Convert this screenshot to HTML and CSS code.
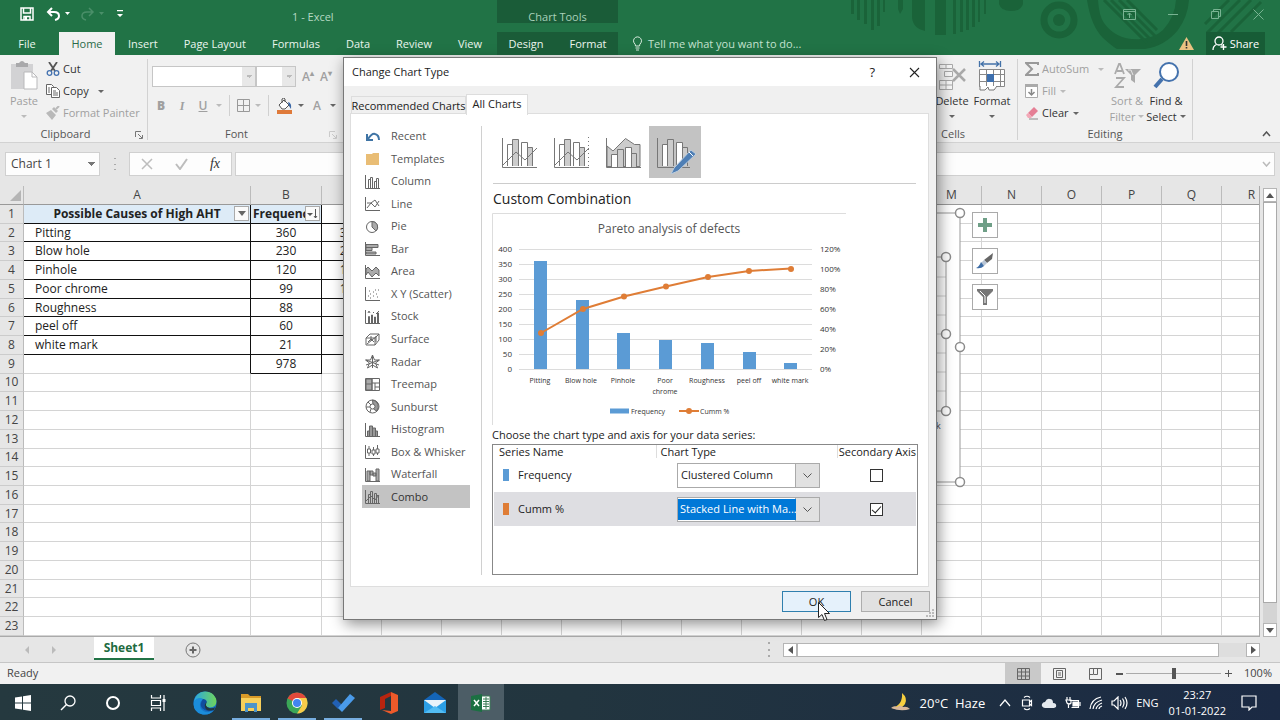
FILE: index.html
```html
<!DOCTYPE html>
<html lang="en">
<head>
<meta charset="utf-8">
<title>1 - Excel</title>
<link rel="stylesheet" href="styles.css">
</head>
<body>
<div class="desktop">
  <header class="titlebar">
    <svg class="backdrop" width="460" height="55" viewBox="820 0 460 55" aria-hidden="true">
      <g fill="#1a6339">
        <path d="M851 0h3v14h-3zM857 0h3v20h-3zM864 0h3v24h-3zM871 0h3v30h-3zM877 0h3v26h-3zM883 0h2v12h-2zM898 0h5v9l-3 5-2-5zM912 0h13v31q-13-3-13-15zM935 0h11v35h-11zM953 0h3v34h-3zM960 0h3v32h-3zM966 0h3v30h-3zM972 0h3v27h-3zM978 0h2v22h-2zM984 0h2v14h-2z"/>
        <path d="M999 0h24v4q-2 7-12 7t-12-7z"/>
        <circle cx="1059" cy="20" r="6"/>
        <path d="M1087 0q4 26 16 38 10 9 14 11h28q20-3 33-19 10-14 11-30h-13q-1 17-13 30-9 8-22 9-24 2-37-16-5-7-6-23z"/>
      </g>
      <g fill="none" stroke="#1a6339">
        <circle cx="1059" cy="20" r="15" stroke-width="7"/>
        <path stroke-width="3" d="M1104 0l43 43M1111 0l42 42M1119 0l38 38M1127 0l30 30M1207 33l33-33M1218 33l33-33M1231 32l30-30M1205 24l24-24"/>
      </g>
    </svg>
    <div class="quick">
      <button aria-label="Save"><svg width="14" height="14" viewBox="0 0 14 14"><path d="M1 1h12v12H1zM3.500 1v5h7V1M4 13V9.500h6V13" fill="none" stroke="#fff" stroke-width="1.500"/><path d="M5 10h2v3H5z" fill="#fff"/></svg></button>
      <button aria-label="Undo"><svg width="24" height="14" viewBox="0 0 24 14"><path d="M6 1L2 5l4 4M2 5h6q5 0 5 4 0 3-4 4" fill="none" stroke="#fff" stroke-width="2"/><path d="M19 5h5l-2.500 3z" fill="#fff"/></svg></button>
      <button aria-label="Redo"><svg width="24" height="14" viewBox="0 0 24 14"><path d="M9 1l4 4-4 4M13 5H7q-5 0-5 4 0 3 4 4" fill="none" stroke="#4a8f69" stroke-width="1.500"/><path d="M19 5h5l-2.500 3z" fill="#4a8f69"/></svg></button>
      <button aria-label="Customize"><svg width="8" height="8" viewBox="0 0 8 8"><path d="M1 0h6v1.200H1zM1 4h6L4 7z" fill="#fff"/></svg></button>
    </div>
    <h1 class="doc">1 - Excel</h1>
    <div class="window-buttons">
      <button aria-label="Ribbon options"><svg width="13" height="11" viewBox="0 0 13 11"><path d="M.5.5h12v10H.5zM.5 2.500h12M6.500 9V4M4.500 6l2-2 2 2"/></svg></button>
      <button aria-label="Minimize"><svg width="11" height="11" viewBox="0 0 11 11"><path d="M0 5.500h10"/></svg></button>
      <button aria-label="Restore"><svg width="10" height="10" viewBox="0 0 10 10"><path d="M.5 2.500h7v7h-7zM2.500 2.500v-2h7v7h-2"/></svg></button>
      <button aria-label="Close"><svg width="11" height="11" viewBox="0 0 11 11"><path d="M.5.5l10 10M10.500.5l-10 10"/></svg></button>
    </div>
  </header>
  <nav class="tabs">
    <button class="tab file">File</button>
    <button class="tab active">Home</button>
    <button class="tab">Insert</button>
    <button class="tab">Page Layout</button>
    <button class="tab">Formulas</button>
    <button class="tab">Data</button>
    <button class="tab">Review</button>
    <button class="tab">View</button>
    <div class="context">
      <span class="context-title">Chart Tools</span>
      <button class="tab">Design</button>
      <button class="tab">Format</button>
    </div>
    <button class="tell"><svg width="11" height="15" viewBox="0 0 11 15"><path d="M3.500 10q0-2-1.500-3.200A4 4 0 1 1 9 6.800Q7.500 8 7.500 10zM3.500 12h4M4 14h3" fill="none" stroke="#d9ecdf"/></svg>Tell me what you want to do...</button>
    <svg class="warn" width="15" height="13" viewBox="0 0 15 13"><path d="M7.500 0L15 13H0z" fill="#eac282"/><path d="M6.700 4h1.600v5H6.700zM6.700 10h1.600v1.500H6.700z" fill="#333"/></svg>
    <button class="share"><svg width="15" height="15" viewBox="0 0 15 15"><circle cx="7" cy="5" r="4"/><path d="M1 14q0-4 3.500-5.500M11.500 8v6M8.500 11h6M9 8.500l1.500 1"/></svg>Share</button>
  </nav>

  <section class="ribbon" aria-label="Ribbon">
    <div class="group clipboard">
      <div class="tools">
        <button class="big dim"><svg width="28" height="30" viewBox="0 0 28 30"><path d="M1 3h22v25H1z" fill="#d2d2d4"/><path d="M6 2h3q3-4 6 0h3v4H6z" fill="#a9a9ab"/><path d="M14 11h8l5 5v12H14z" fill="#fff" stroke="#b9b9bb"/><path d="M22 11v5h5" fill="none" stroke="#b9b9bb"/></svg>Paste<i class="caret"></i></button>
        <div class="stack">
          <button><svg width="14" height="14" viewBox="0 0 14 14"><path d="M3 0l6 9M11 0L5 9" stroke="#555" stroke-width="1.800"/><circle cx="3.500" cy="11" r="2.300" fill="none" stroke="#4472b0" stroke-width="1.300"/><circle cx="10.500" cy="11" r="2.300" fill="none" stroke="#4472b0" stroke-width="1.300"/></svg>Cut</button>
          <button><svg width="14" height="14" viewBox="0 0 14 14"><g fill="#fff" stroke="#666"><path d="M.5.500h5l2 2v8h-7z"/><path d="M5.500 3.500h5l3 3v7h-8z"/></g><path d="M2 4h2M2 6h2M2 8h2M7 7h3M7 9h5M7 11h5" stroke="#666"/></svg>Copy<i class="caret"></i></button>
          <button class="dim"><svg width="14" height="14" viewBox="0 0 14 14"><path d="M0 7l5-3 5 5-4 5zM6 3l2-2 4 4-2 2z" fill="#b9b9b9"/><path d="M10 3l3-3" stroke="#b9b9b9" stroke-width="2"/></svg>Format Painter</button>
        </div>
      </div>
      <footer>Clipboard<svg class="launcher" width="8" height="8" viewBox="0 0 8 8"><path d="M.5 6V.5H6M3 3l4 4M7.500 4v3.500H4" /></svg></footer>
    </div>
    <div class="group font">
      <div class="tools font-tools">
        <div class="line">
          <select class="combo face" aria-label="Font" disabled><option></option></select><select class="combo size" aria-label="Font size" disabled><option></option></select>
          <button class="letter dim" aria-label="Increase font size">A<sup>▴</sup></button>
          <button class="letter small dim" aria-label="Decrease font size">A<sup>▾</sup></button>
        </div>
        <div class="line second">
          <button class="letter dim"><b>B</b></button>
          <button class="letter dim"><i class="serif">I</i></button>
          <button class="letter dim"><u>U</u></button><i class="caret pale"></i>
          <span class="sep"></span>
          <button class="dim" aria-label="Borders"><svg width="13" height="13" viewBox="0 0 13 13"><path d="M.5.500h12v12H.5zM6.500 0v13M0 6.500h13" fill="none" stroke="#999"/></svg></button><i class="caret pale"></i>
          <span class="sep"></span>
          <button aria-label="Fill colour"><svg width="17" height="16" viewBox="0 0 17 16"><path d="M1 12h15v4H1z" fill="#df7a3a"/><path d="M3 7l5-5 5 5-4 4H6z" fill="#fff" stroke="#555"/><path d="M6 5V1q2-2 3 0v3" fill="none" stroke="#555"/><path d="M12 4q4 1 3 7l-2-3z" fill="#3a67a6"/></svg></button><i class="caret"></i>
          <button class="letter dim" aria-label="Font colour">A</button><i class="caret"></i>
        </div>
      </div>
      <footer>Font<svg class="launcher pale" width="8" height="8" viewBox="0 0 8 8"><path d="M.5 6V.5H6M3 3l4 4M7.500 4v3.500H4"/></svg></footer>
    </div>
    <div class="filler"></div>
    <div class="group cells">
      <div class="tools">
        <button class="big"><svg width="28" height="30" viewBox="0 0 28 30"><g fill="#f8f8f8" stroke="#aaa"><path d="M1.500 3.500h13v4h-13zM8 3.500v4M6.500 10.500h8v5h-8zM1.500 19.500h13v9h-13zM8 19.500v9M1.500 24h13"/></g><path d="M15 8l12 12M27 8L15 20" stroke="#a9a9a9" stroke-width="2.500"/></svg>Delete<i class="caret"></i></button>
        <button class="big"><svg width="28" height="30" viewBox="0 0 28 30"><path d="M1.500 0v6M22.500 0v6M3 3h18M6 .500L3 3l3 2.500M18 .500L21 3l-3 2.500" fill="none" stroke="#4472a8" stroke-width="1.300"/><path d="M1.500 8.500h25v17h-25zM1.500 13.500h25M1.500 20.500h25M8.500 8v18M15.500 8v18M22.500 8v18" fill="#fff" stroke="#888"/><path d="M9 13h7v8H9z" fill="#3d6fae"/><path d="M2 25v4h5l3-3 1 3h5l3-4" fill="#fff" stroke="#777"/></svg>Format<i class="caret"></i></button>
      </div>
      <footer>Cells</footer>
    </div>
    <div class="group editing">
      <div class="tools">
        <div class="stack">
          <button class="dim"><svg width="14" height="14" viewBox="0 0 14 14"><path d="M13 3V1H1l6 6-6 6h12v-2" fill="none" stroke="#999" stroke-width="2"/></svg>AutoSum<i class="caret pale far"></i></button>
          <button class="dim"><svg width="14" height="14" viewBox="0 0 14 14"><path d="M.5.500h12v13H.5z" fill="#fff" stroke="#aaa"/><path d="M0 0h13v3H0z" fill="#aaa"/><path d="M6.500 5v6M3.500 8l3 3 3-3" fill="none" stroke="#888" stroke-width="1.500"/></svg>Fill<i class="caret pale"></i></button>
          <button><svg width="14" height="14" viewBox="0 0 14 14"><path d="M3 7l6-6 4 4-6 6z" fill="#e57f95"/><path d="M3 7l4 4-1 1H3L1 9z" fill="#f3a9b8"/><path d="M4 13h9" stroke="#888"/></svg>Clear<i class="caret"></i></button>
        </div>
        <button class="big dim"><svg width="28" height="30" viewBox="0 0 28 30"><path d="M2 13L6 3h1l4 10M4 10h5M3 17h8L3 26h8" fill="none" stroke="#aaa" stroke-width="1.800"/><path d="M12 8h16l-6 6v8l-4-3v-5z" fill="#aaa"/><path d="M15 9h3l2 5" fill="none" stroke="#e4e4e4"/></svg>Sort &amp;<br><span>Filter<i class="caret pale"></i></span></button>
        <button class="big"><svg width="28" height="30" viewBox="0 0 28 30"><circle cx="17" cy="11" r="9" fill="#fff" stroke="#4472ad" stroke-width="2"/><path d="M10 18l-7 8" stroke="#4472ad" stroke-width="4"/></svg>Find &amp;<br><span>Select<i class="caret"></i></span></button>
      </div>
      <footer>Editing</footer>
    </div>
    <div class="ribbon-end"><button aria-label="Collapse ribbon"><svg width="9" height="6" viewBox="0 0 9 6"><path d="M1 5l3.500-4L8 5" fill="none" stroke="#555" stroke-width="1.500"/></svg></button></div>
  </section>

  <section class="formula-bar">
    <select class="combo namebox" aria-label="Name box"><option>Chart 1</option></select>
    <span class="dots"></span>
    <div class="fx">
      <button aria-label="Cancel entry"><svg width="12" height="12" viewBox="0 0 12 12"><path d="M1 1l10 10M11 1L1 11" stroke="#bdbdbd" stroke-width="1.500"/></svg></button>
      <button aria-label="Enter"><svg width="13" height="12" viewBox="0 0 13 12"><path d="M1 6l4 5 7-10" fill="none" stroke="#bdbdbd" stroke-width="2"/></svg></button>
      <button class="serif fxb">fx</button>
    </div>
    <div class="entry"><input aria-label="Formula bar"><svg width="9" height="6" viewBox="0 0 9 6"><path d="M1 1l3.500 4L8 1" fill="none" stroke="#bbb" stroke-width="1.500"/></svg></div>
  </section>

  <main class="sheet-area">
    <div class="sheet">
      <table class="grid">
        <colgroup><col class="c-num"><col class="c-a"><col class="c-b"><col span="16" class="c-x"></colgroup>
        <thead><tr><th class="corner"><svg width="11" height="11" viewBox="0 0 11 11"><path d="M11 0v11H0z" fill="#b5b5b5"/></svg></th><th>A</th><th>B</th><th></th><th></th><th></th><th></th><th></th><th></th><th></th><th></th><th></th><th></th><th>M</th><th>N</th><th>O</th><th>P</th><th>Q</th><th>R</th></tr></thead>
        <tbody>
          <tr class="boxed head"><th>1</th><td>Possible Causes of High AHT<button class="filter" aria-label="Filter causes"><svg width="8" height="5" viewBox="0 0 8 5"><path d="M0 0h8L4 5z" fill="#666"/></svg></button></td><td>Frequency<button class="filter" aria-label="Filter frequency"><svg width="11" height="10" viewBox="0 0 11 10"><path d="M0 4h6L3 7z" fill="#555"/><path d="M8.500 0v9M7 7l1.500 2L10 7" fill="none" stroke="#555"/></svg></button></td><td></td><td colspan="15" class="blank"></td></tr>
          <tr class="boxed"><th>2</th><td>Pitting</td><td>360</td><td>37%</td><td colspan="15" class="blank"></td></tr>
          <tr class="boxed"><th>3</th><td>Blow hole</td><td>230</td><td>24%</td><td colspan="15" class="blank"></td></tr>
          <tr class="boxed"><th>4</th><td>Pinhole</td><td>120</td><td>12%</td><td colspan="15" class="blank"></td></tr>
          <tr class="boxed"><th>5</th><td>Poor chrome</td><td>99</td><td>10%</td><td colspan="15" class="blank"></td></tr>
          <tr class="boxed"><th>6</th><td>Roughness</td><td>88</td><td></td><td colspan="15" class="blank"></td></tr>
          <tr class="boxed"><th>7</th><td>peel off</td><td>60</td><td></td><td colspan="15" class="blank"></td></tr>
          <tr class="boxed"><th>8</th><td>white mark</td><td>21</td><td></td><td colspan="15" class="blank"></td></tr>
          <tr class="total"><th>9</th><td></td><td>978</td><td></td><td colspan="15" class="blank"></td></tr>
          <tr><th>10</th><td></td><td></td><td></td><td colspan="15" class="blank"></td></tr>
          <tr><th>11</th><td></td><td></td><td></td><td colspan="15" class="blank"></td></tr>
          <tr><th>12</th><td></td><td></td><td></td><td colspan="15" class="blank"></td></tr>
          <tr><th>13</th><td></td><td></td><td></td><td colspan="15" class="blank"></td></tr>
          <tr><th>14</th><td></td><td></td><td></td><td colspan="15" class="blank"></td></tr>
          <tr><th>15</th><td></td><td></td><td></td><td colspan="15" class="blank"></td></tr>
          <tr><th>16</th><td></td><td></td><td></td><td colspan="15" class="blank"></td></tr>
          <tr><th>17</th><td></td><td></td><td></td><td colspan="15" class="blank"></td></tr>
          <tr><th>18</th><td></td><td></td><td></td><td colspan="15" class="blank"></td></tr>
          <tr><th>19</th><td></td><td></td><td></td><td colspan="15" class="blank"></td></tr>
          <tr><th>20</th><td></td><td></td><td></td><td colspan="15" class="blank"></td></tr>
          <tr><th>21</th><td></td><td></td><td></td><td colspan="15" class="blank"></td></tr>
          <tr><th>22</th><td></td><td></td><td></td><td colspan="15" class="blank"></td></tr>
          <tr><th>23</th><td></td><td></td><td></td><td colspan="15" class="blank"></td></tr>
        </tbody>
      </table>
      <svg class="chart-object" width="110" height="284" viewBox="860 205 110 284" aria-label="Chart 1">
        <path d="M860 213h100v269H860z" fill="#fff"/>
        <path d="M860 277h86M860 296h86M860 315h86M860 334h86M860 353h86M860 372h86M860 391h86" stroke="#d0d0d0"/>
        <path d="M860 213h100v269H860M860 257h86v154h-86" fill="none" stroke="#999"/>
        <text x="936" y="429" font-size="9" fill="#555">k</text>
        <g fill="#fff" stroke="#8c8c8c" stroke-width="1.500"><circle cx="960" cy="213" r="4.500"/><circle cx="960" cy="347" r="4.500"/><circle cx="960" cy="482" r="4.500"/><circle cx="946" cy="257" r="4.500"/><circle cx="946" cy="334" r="4.500"/><circle cx="946" cy="411" r="4.500"/></g>
      </svg>
      <div class="chart-buttons">
        <button aria-label="Chart elements"><svg width="14" height="14" viewBox="0 0 14 14"><path d="M5 0h4v5h5v4H9v5H5V9H0V5h5z" fill="#6f9f87"/></svg></button>
        <button aria-label="Chart styles"><svg width="18" height="18" viewBox="0 0 18 18"><path d="M17 1l-1 6-5 4-3-3z" fill="#666"/><path d="M8 8l3 3-3 3-3-3z" fill="#b9c6d6"/><path d="M5 10l3 4q-3 3-8 2 3-1 5-6z" fill="#3e6da6"/></svg></button>
        <button aria-label="Chart filters"><svg width="18" height="16" viewBox="0 0 18 16"><path d="M1 0h16v2l-6 6v8H7V8L1 2z" fill="#777"/><path d="M4 2l5 5v7" fill="none" stroke="#fff"/></svg></button>
      </div>
    </div>
    <div class="vscroll">
      <button aria-label="Scroll up"><svg width="8" height="5" viewBox="0 0 8 5"><path d="M0 5l4-5 4 5z"/></svg></button>
      <div class="vtrack"><div class="vthumb"></div></div>
      <button aria-label="Scroll down"><svg width="8" height="5" viewBox="0 0 8 5"><path d="M0 0h8L4 5z"/></svg></button>
    </div>
  </main>

  <section class="sheet-tabs">
    <div class="navs"><svg width="4" height="8" viewBox="0 0 4 8"><path d="M4 0v8L0 4z" fill="#bbb"/></svg><svg width="4" height="8" viewBox="0 0 4 8"><path d="M0 0v8l4-4z" fill="#bbb"/></svg></div>
    <button class="sheet-tab">Sheet1</button>
    <button class="add" aria-label="New sheet"><svg width="16" height="16" viewBox="0 0 16 16"><circle cx="8" cy="8" r="7" fill="none" stroke="#777"/><path d="M8 4.500v7M4.500 8h7" stroke="#666" stroke-width="2"/></svg></button>
    <div class="filler"></div>
    <span class="dots"></span>
    <div class="hscroll">
      <button aria-label="Scroll left"><svg width="5" height="8" viewBox="0 0 5 8"><path d="M5 0v8L0 4z"/></svg></button>
      <div class="htrack"><div class="hthumb"></div></div>
      <button aria-label="Scroll right"><svg width="5" height="8" viewBox="0 0 5 8"><path d="M0 0v8l5-4z"/></svg></button>
    </div>
  </section>

  <section class="status">
    <span class="ready">Ready</span>
    <button class="view on" aria-label="Normal"><svg width="13" height="12" viewBox="0 0 13 12"><path d="M.5.500h12v11H.5zM4.500 0v12M8.500 0v12M0 4h13M0 8h13"/></svg></button>
    <button class="view" aria-label="Page layout"><svg width="13" height="12" viewBox="0 0 13 12"><path d="M.5.500h12v11H.5zM3.500 2.500h6v7h-6zM5 5h3M5 7h3"/></svg></button>
    <button class="view" aria-label="Page break preview"><svg width="13" height="12" viewBox="0 0 13 12"><path d="M.5.500h12v11H.5zM4.500 0v6.500h4V0M0 6.500h4"/></svg></button>
    <span class="zoom-sign minus"></span>
    <input class="zoom" type="range" min="0" max="100" value="50" aria-label="Zoom">
    <span class="zoom-sign plus"></span>
    <span class="percent">100%</span>
  </section>

  <footer class="taskbar">
    <div class="system">
      <button aria-label="Start"><svg width="16" height="16" viewBox="0 0 16 16"><path d="M0 2.500l7-1v6H0zM8 1.300L16 0v7.500H8zM0 8.500h7v6l-7-1zM8 8.500h8V16l-8-1.300z" fill="#fff"/></svg></button>
      <button aria-label="Search"><svg width="16" height="16" viewBox="0 0 16 16"><circle cx="10" cy="6" r="5" fill="none" stroke="#fff" stroke-width="1.300"/><path d="M6.500 9.500L1 15" stroke="#fff" stroke-width="1.500"/></svg></button>
      <button aria-label="Cortana"><svg width="16" height="16" viewBox="0 0 16 16"><circle cx="8" cy="8" r="6" fill="none" stroke="#fff" stroke-width="2"/></svg></button>
      <button aria-label="Task view"><svg width="16" height="16" viewBox="0 0 16 16"><path d="M1.500 0v3h9V0M1.500 5.500h9v5h-9zM1.500 16v-3h9v3M14 0v16" fill="none" stroke="#fff" stroke-width="1.200"/><path d="M12.500 4h3v3h-3z" fill="#fff"/></svg></button>
    </div>
    <div class="apps">
      <button aria-label="Edge"><svg width="24" height="24" viewBox="0 0 24 24"><defs><linearGradient id="eg" x1="0" y1="0" x2="1" y2="0"><stop offset="0" stop-color="#2ba8e0"/><stop offset="1" stop-color="#6fd45c"/></linearGradient></defs><circle cx="12" cy="12" r="11.500" fill="#1673c6"/><path d="M1 10Q3 1 12 .5q8 0 11 7 2 8-6 9-5 0-4-4-1-5-6-5-5 0-6 6z" fill="url(#eg)"/><path d="M1 10q4-5 9-2-5 4-2 10 4 5 12 2-5 5-12 3Q-1 20 1 10z" fill="#1b8ddb"/><path d="M10 8q-4 5-1 9 5 5 11 2l2-2q-4 2-8-1-3-3 0-5-1-3-4-3z" fill="#114d9e"/><path d="M14 11q-3 4 2 6 4 1 6-1l-1 3q-8 2-9-3-1-3 2-5z" fill="#22363e"/></svg></button>
      <button class="running" aria-label="File Explorer"><svg width="22" height="20" viewBox="0 0 22 20"><path d="M1 1h7l2 2h11v4H1z" fill="#d99a28"/><path d="M1 5h20v13H1z" fill="#f7cf5b"/><path d="M5 10h12v9h-3v-4H8v4H5z" fill="#4c94c9"/></svg></button>
      <button class="running" aria-label="Chrome"><svg width="22" height="22" viewBox="0 0 22 22"><circle cx="11" cy="11" r="10.500" fill="#3ba757"/><path d="M11 11L1.500 6.500A10.500 10.500 0 0 1 20.500 6.500z" fill="#e2493b"/><path d="M11 6h9.300A10.500 10.500 0 0 1 11 21.500l5-8z" fill="#f7cb4a"/><circle cx="11" cy="11" r="5" fill="#fff"/><circle cx="11" cy="11" r="4" fill="#4285ee"/></svg></button>
      <button class="running" aria-label="To Do"><svg width="24" height="20" viewBox="0 0 24 20"><path d="M1 10l4-4 6 6-4 4z" fill="#2260b4"/><path d="M7 15L19 1l5 4-13 14z" fill="#4a9bea"/></svg></button>
      <button aria-label="Office"><svg width="20" height="22" viewBox="0 0 20 22"><path d="M12 0l7 3v16l-7 3-9-4 9 1z" fill="#ee5a2a"/><path d="M1 5L12 0v4L6 7v9l-5 2z" fill="#b7240f"/></svg></button>
      <button aria-label="Mail"><svg width="24" height="22" viewBox="0 0 24 22"><path d="M1 8l11-8 11 8v13H1z" fill="#1465b8"/><path d="M1 8h22v10H1z" fill="#e8f3fa"/><path d="M1 8l11 8 11-8v13H1z" fill="#2b9fe6"/><path d="M1 21l11-7 11 7z" fill="#52bdf3"/></svg></button>
      <button class="current" aria-label="Excel"><svg width="20" height="18" viewBox="0 0 20 18"><path d="M10 2h9v14h-9z" fill="#fff" stroke="#3b7d57"/><path d="M12 5h6M12 7.500h6M12 10h6M12 12.500h6M15 3v12" stroke="#3b7d57"/><path d="M0 2l11-2v18L0 16z" fill="#1b7042"/><path d="M3 6l5 6M8 6l-5 6" stroke="#fff" stroke-width="1.500"/></svg></button>
    </div>
    <div class="filler"></div>
    <div class="tray">
      <svg class="moon" width="22" height="19" viewBox="0 0 22 19"><path d="M12 0q6 5 3 11-4 6-13 4 11-3 10-15z" fill="#f6cf3f"/><path d="M1 15q3-3 6-1 3-3 6 0 4-1 7 2-9 3-19-1z" fill="#d8b79a"/></svg>
      <span class="weather">20°C&nbsp; Haze</span>
      <svg class="t-chev" width="12" height="8" viewBox="0 0 12 8"><path d="M1 7l5-6 5 6"/></svg>
      <svg width="12" height="16" viewBox="0 0 12 16"><path d="M1.500 5h7v6h-7zM8.500 7l2-1.500v5L8.500 9M3 2.500Q6 0 9 2.500M3 13.500q3 2.500 6 0"/></svg>
      <svg width="16" height="12" viewBox="0 0 16 12"><path d="M4 11q-4-1-3-4 1-2 3-2 2-4 5-3 3 0 3 4 4 0 3 4l-2 1z" fill="#e4e9ee" stroke="none"/></svg>
      <svg width="16" height="12" viewBox="0 0 16 12"><path d="M4.500 3.500h9v7h-7M15 5v4M2 0v3M5 0v3M1 3h5v3q-2 2-4 0zM3.500 7v4"/><path d="M8 5h5v4H8z" fill="#fff"/></svg>
      <svg width="14" height="14" viewBox="0 0 14 14"><path d="M1 13Q2 3 12 1M4 13q1-7 9-9M7 13q1-4 6-6M10 13q0-2 3-3"/></svg>
      <svg width="17" height="14" viewBox="0 0 17 14"><path d="M1 5h2l4-4v12L3 9H1zM9 4q2 3 0 6M11.500 2.500q3 4.500 0 9M14 1q4 6 0 12"/></svg>
      <span class="lang">ENG</span>
      <time>23:27<br>01-01-2022</time>
      <svg class="note" width="16" height="16" viewBox="0 0 16 16"><path d="M1 1h14v11h-4l-3 3v-3H1z"/></svg>
    </div>
  </footer>

  <div class="dialog" role="dialog" aria-labelledby="dlg-title">
    <header class="dialog-title">
      <h2 id="dlg-title">Change Chart Type</h2>
      <button aria-label="Help">?</button>
      <button aria-label="Close dialog"><svg width="11" height="11" viewBox="0 0 11 11"><path d="M1 1l9 9M10 1l-9 9" stroke="#222" stroke-width="1.100"/></svg></button>
    </header>
    <div class="dialog-tabs"><button>Recommended Charts</button><button class="on">All Charts</button></div>
    <div class="panel">
      <nav class="kinds">
        <button><svg viewBox="0 0 15 15"><path d="M2 5v6h6M3 10q4-6 7-5 4 1 4 6" fill="none" stroke="#3f74a5" stroke-width="2"/></svg>Recent</button>
        <button><svg viewBox="0 0 15 15"><path d="M1 3h6l1-1h6v12H1z" fill="#e9bd75" stroke="none"/></svg>Templates</button>
        <button><svg viewBox="0 0 15 15"><path d="M.5 1v13.500H15M3.500 14V5.500h2V14M5.500 14V3.500h2V14M9.500 14V7.500h2V14M11.500 14V4.500h2V14"/></svg>Column</button>
        <button><svg viewBox="0 0 15 15"><path d="M.5 1v13.500H15M2 12l4-5 4 4 4-6M2 7l4 0 4-3 4 6"/></svg>Line</button>
        <button><svg viewBox="0 0 15 15"><circle cx="7" cy="8" r="5.500"/><path d="M7 8V2.500A5.500 5.500 0 0 1 11 12z" fill="#aaa"/></svg>Pie</button>
        <button><svg viewBox="0 0 15 15"><path d="M.5 1v13.500H15"/><path d="M1 3.500h12v3H1zM1 6.500h6v3H1zM1 11h10v2H1z" fill="#aaa"/></svg>Bar</button>
        <button><svg viewBox="0 0 15 15"><path d="M1 5l2-2 4 4 4-4 3 3v6l-3-3-4 4-4-5-2 3z" fill="#aaa"/><path d="M.5 1v13.500H15"/></svg>Area</button>
        <button><svg viewBox="0 0 15 15"><path d="M.5 1v13.500H15M3 10h1M5 8h1M5 12h1M8 10h1M8 6h1M11 8h1M10 4h1M12 11h1M13 4h1M4 5h1"/></svg>X Y (Scatter)</button>
        <button><svg viewBox="0 0 15 15"><path d="M.5 1v13.500H15M3.500 14V7.500h1V14M6.500 14V6h1v8M9.500 14V8h1v6M12.500 14V4h1v10M3 4l1-2 1 2M8 4l1-1M11 5l3-3"/></svg>Stock</button>
        <button><svg viewBox="0 0 15 15"><path d="M1 6l4-4h9v6l-4 5H1zM1 6h9l4-4M10 6v7M3 10l3-3 3 3M6 4v5M11 4v6M2 12l10-8"/></svg>Surface</button>
        <button><svg viewBox="0 0 15 15"><path d="M7.500 1v13M1 6l13 5M14 6L1 11M7.500 1l2 5 5 0-4 3 2 5-5-3-5 3 2-5-4-3h5z"/></svg>Radar</button>
        <button><svg viewBox="0 0 15 15"><path d="M.5 1.500h14v12H.5z"/><path d="M1 2h6v11H1z" fill="#aaa"/><path d="M7 2v12M0 7h7M7 6h7M10 6v8M10 10h4"/></svg>Treemap</button>
        <button><svg viewBox="0 0 15 15"><circle cx="7.500" cy="7.500" r="6.500"/><path d="M7.500 1a6.500 6.500 0 0 1 4 11l-3-2z" fill="#999"/><circle cx="7.500" cy="7.500" r="2.500" fill="#fff"/><path d="M1 8h4M3 3l3 3M5 13l1-3"/></svg>Sunburst</button>
        <button><svg viewBox="0 0 15 15"><path d="M.5 1v13.500H15"/><path d="M2.500 14V9h2v5M4.500 14V4h3v10M7.500 14V6h3v8M10.500 14V9h2v5" fill="#999"/></svg>Histogram</button>
        <button><svg viewBox="0 0 15 15"><path d="M.5 1v13.500H15M4 2v3M4 9v3M2.500 5h3v4h-3zM8.500 3v3M8.500 10v2M7 6h3v4H7zM12.500 1v4M12.500 9v2M11 5h3v4h-3z"/></svg>Box &amp; Whisker</button>
        <button><svg viewBox="0 0 15 15"><path d="M.5 1v13.500H15"/><path d="M2 4h3v10H2zM5 4h3v4H5zM8 6h3v3H8zM11 2h3v12h-3z" fill="#aaa"/></svg>Waterfall</button>
        <button class="on"><svg viewBox="0 0 15 15"><path d="M.5 1v13.500H15M3.500 14V5.500h2V14M5.500 14V2.500h2V14M9.500 14V4.500h2V14M11.500 14V6.500h2V14M1 12l5-5 4 4 4-5"/></svg>Combo</button>
      </nav>
      <div class="detail">
        <div class="subtypes">
          <button aria-label="Clustered column and line"><svg viewBox="0 0 36 32"><path d="M6.500 30V8.500h5V30M20.500 30V6.500h6V30" fill="#fff"/><path d="M11.500 30V3.500h6V30M26.500 30V11.500h5V30" fill="#ccc"/><path d="M1.500 2v29.500H36M2 29l13-13 9 8 12-12"/></svg></button>
          <button aria-label="Column and line with secondary axis"><svg viewBox="0 0 36 32"><path d="M6.500 30V8.500h5V30M20.500 30V6.500h6V30" fill="#fff"/><path d="M11.500 30V3.500h6V30M26.500 30V11.500h5V30" fill="#ccc"/><path d="M1.500 2v29.500H36M2 29l13-13 9 8 12-12"/><path d="M35.500 1v30" stroke-dasharray="1 3"/></svg></button>
          <button aria-label="Stacked area and column"><svg viewBox="0 0 36 32"><path d="M2 10l6 5L20.500 2.500l9 6H35v22H2z" fill="#ccc"/><path d="M6.500 31V18.500h6V31M20.500 31V11.500h6V31" fill="#fff"/><path d="M12.500 31V13.500h6V31M26.500 31V17.500h5V31" fill="#ccc"/><path d="M1.500 2v29.500H36"/></svg></button>
          <button class="on" aria-label="Custom combination"><svg viewBox="0 0 40 38"><path d="M6.500 30V8.500h5V30M20.500 30V6.500h6V30" fill="#fff"/><path d="M11.500 30V3.500h6V30M26.500 30V11.500h5V30" fill="#ccc"/><path d="M1.500 2v29.500H34"/><path d="M15 38l3-6 17-18 5 4-18 17z" fill="#4f7fb5" stroke="#bcd"/><path d="M33 16l4 4" stroke="#fff"/></svg></button>
        </div>
        <h3>Custom Combination</h3>
        <svg class="preview" width="354" height="212" viewBox="0 0 354 212" role="img" aria-label="Pareto analysis of defects">
          <path d="M.5 212V.5H354" fill="none" stroke="#ddd"/>
          <path d="M27 36.500h293M27 51.500h293M27 66.500h293M27 81.500h293M27 96.500h293M27 111.500h293M27 126.500h293M27 141.500h293M27 156.500h293" stroke="#dcdcdc"/>
          <path d="M42 48h13v108H42zM84 87h13v69H84zM125 120h13v36h-13zM167 127h13v29h-13zM209 130h13v26h-13zM251 139h13v17h-13zM292 150h13v6h-13z" fill="#5b9bd5"/>
          <path d="M49 120l42-24 41-12.500 42-10 42-9.500 41-6 42-2.500" fill="none" stroke="#df7d36" stroke-width="2"/>
          <g fill="#df7d36"><circle cx="49" cy="120" r="3"/><circle cx="91" cy="96" r="3"/><circle cx="132" cy="83.500" r="3"/><circle cx="174" cy="73.500" r="3"/><circle cx="216" cy="64" r="3"/><circle cx="257" cy="58" r="3"/><circle cx="299" cy="56" r="3"/></g>
          <text class="ct" x="177" y="20">Pareto analysis of defects</text>
          <g class="ax num end"><text x="20" y="39">400</text><text x="20" y="54">350</text><text x="20" y="69">300</text><text x="20" y="84">250</text><text x="20" y="99">200</text><text x="20" y="114">150</text><text x="20" y="129">100</text><text x="20" y="144">50</text><text x="20" y="159">0</text></g>
          <g class="ax num"><text x="328" y="39">120%</text><text x="328" y="59">100%</text><text x="328" y="79">80%</text><text x="328" y="99">60%</text><text x="328" y="119">40%</text><text x="328" y="139">20%</text><text x="328" y="159">0%</text></g>
          <g class="ax mid"><text x="48" y="170">Pitting</text><text x="89" y="170">Blow hole</text><text x="131" y="170">Pinhole</text><text x="173" y="170">Poor</text><text x="173" y="181">chrome</text><text x="215" y="170">Roughness</text><text x="257" y="170">peel off</text><text x="298" y="170">white mark</text></g>
          <path d="M118 195.500h19v5h-19z" fill="#5b9bd5"/><path d="M187 198h20" stroke="#df7d36" stroke-width="2"/><circle cx="197" cy="198" r="3" fill="#df7d36"/>
          <g class="ax"><text x="139" y="201">Frequency</text><text x="208" y="201">Cumm %</text></g>
        </svg>
        <p class="hint">Choose the chart type and axis for your data series:</p>
        <div class="series-box">
          <table class="series">
            <colgroup><col class="s-name"><col class="s-type"><col class="s-axis"></colgroup>
            <thead><tr><th>Series Name</th><th>Chart Type</th><th>Secondary Axis</th></tr></thead>
            <tbody>
              <tr><td><i class="swatch blue"></i>Frequency</td><td><div class="pick"><select aria-label="Chart type for Frequency"><option>Clustered Column</option></select><svg width="9" height="6" viewBox="0 0 9 6"><path d="M.5.500l4 4 4-4" fill="none" stroke="#555"/></svg></div></td><td><input type="checkbox" aria-label="Frequency on secondary axis"></td></tr>
              <tr class="sel"><td><i class="swatch orange"></i>Cumm %</td><td><div class="pick hot"><select aria-label="Chart type for Cumm %"><option>Stacked Line with Ma...</option></select><svg width="9" height="6" viewBox="0 0 9 6"><path d="M.5.500l4 4 4-4" fill="none" stroke="#555"/></svg></div></td><td><input type="checkbox" checked aria-label="Cumm % on secondary axis"></td></tr>
            </tbody>
          </table>
        </div>
      </div>
    </div>
    <div class="actions"><button class="ok">OK</button><button>Cancel</button></div>
    <svg class="grip" width="8" height="8" viewBox="0 0 8 8"><path d="M6 0h2v2H6zM6 3h2v2H6zM3 3h2v2H3zM6 6h2v2H6zM3 6h2v2H3zM0 6h2v2H0z" fill="#bbb"/></svg>
    <svg class="cursor" width="12" height="19" viewBox="0 0 12 19"><path d="M.5.500v15l3.500-3 2.500 6 2.500-1-2.500-6h5z" fill="#fff" stroke="#222"/></svg>
  </div>
</div>
</body>
</html>
```
FILE: styles.css
```css
* { box-sizing: border-box; }
body { margin: 0; font: 11px/16px "Open Sans", "Noto Sans", sans-serif; color: #333; }
button { font: inherit; color: inherit; border: 0; padding: 0; margin: 0; background: none; display: flex; align-items: center; justify-content: center; white-space: nowrap; }
select, input { font: inherit; color: inherit; margin: 0; }
h1, h2, h3, p { margin: 0; font-weight: 400; }
svg { flex: none; display: block; }
.desktop { position: relative; display: flex; flex-direction: column; min-height: 100vh; overflow: hidden; background: #e6e6e6; }
.filler { flex: 1; }
.serif { font-family: "Liberation Serif", serif; font-style: italic; }

/* title bar */
.titlebar { position: relative; height: 32px; display: flex; align-items: center; background: #217346; color: #b5d9c3; padding: 0 16px 4px 20px; }
.backdrop { position: absolute; right: 0; top: 0; z-index: 1; }
.quick { display: flex; gap: 12px; align-items: center; flex: 1; }
.quick button:nth-child(3) { margin: 0 -2px; }
.quick button:last-child { margin-left: 2px; }
.doc { font-size: 11px; position: absolute; left: 292px; top: 9px; }
.window-buttons { position: relative; z-index: 2; display: flex; gap: 32px; }
.window-buttons path { fill: none; stroke: #79b392; }

/* ribbon tabs */
.tabs { display: flex; height: 23px; background: #217346; color: #eaf5ee; padding-right: 15px; align-items: stretch; }
.tab { padding: 0 13px; }
.tab.file { width: 54px; margin-right: 5px; }
.tab.active { background: #f1f1f1; color: #2b6b49; width: 56px; padding: 0; }
.context { position: relative; display: flex; margin-left: 2px; background: #1a5c38; box-shadow: 0 -32px #1a5c38; z-index: 1; width: 121px; justify-content: center; }
.context-title { position: absolute; left: 0; right: 0; top: -23px; text-align: center; color: #a9d1ba; }
.tell { flex: 1; justify-content: flex-start; gap: 5px; padding-left: 14px; color: #c4e2d0; }
.warn { align-self: center; margin-right: 12px; z-index: 2; }
.share { background: #175c36; width: 59px; gap: 3px; color: #fff; z-index: 2; }
.share svg { fill: none; stroke: #fff; stroke-width: 1.300; }

/* ribbon */
.ribbon { display: flex; height: 88px; background: #f1f1f1; border-bottom: 1px solid #d2d2d2; }
.group { display: flex; flex-direction: column; border-right: 1px solid #d2d2d2; margin: 4px 0 2px; padding-top: 2px; }
.group .tools { display: flex; flex: 1; min-height: 0; }
.group footer { position: relative; height: 12px; line-height: 12px; text-align: center; color: #555; }
.clipboard { width: 148px; }
.clipboard .tools { padding-left: 7px; gap: 5px; }
.clipboard footer { padding-right: 16px; }
.launcher { position: absolute; right: 4px; top: 3px; fill: none; stroke: #777; }
.launcher.pale { right: 8px; stroke: #ccc; }
.font { width: 197px; border-right: 0; }
.font footer { padding-right: 20px; }
.cells { width: 87px; }
.cells .tools { justify-content: flex-end; gap: 6px; padding-right: 8px; }
.cells footer { padding-right: 42px; }
.editing { width: 175px; }
.editing .tools { padding-left: 7px; gap: 5px; }
.editing .stack { width: 80px; }
.ribbon-end { width: 87px; display: flex; justify-content: flex-end; align-items: flex-end; padding: 0 9px 5px; }
.big { flex-direction: column; justify-content: flex-start; line-height: 15px; gap: 1px; width: 34px; }
.big br { display: none; }
.big svg { margin-bottom: 1px; }
.big .caret { margin: 6px 0 0; }
.big span { display: flex; align-items: center; }
.big span .caret { margin: 0 0 0 3px; }
.stack { display: flex; flex-direction: column; }
.stack button { height: 22px; gap: 3px; justify-content: flex-start; }
.stack button:first-child { margin-top: -3px; }
.dim { color: #a0a0a0; }
.caret { width: 0; height: 0; border: 3px solid transparent; border-top-color: #666; border-bottom: 0; margin-left: 6px; flex: none; }
.editing .stack .caret { margin-left: 1px; }
.editing .stack .far { margin-left: 6px; }
.caret.pale, .dim .caret { border-top-color: #bbb; }
.font-tools { flex-direction: column; padding-left: 4px; gap: 8px; }
.line { display: flex; align-items: center; height: 21px; margin-top: 5px; }
.line.second { gap: 5px; margin-top: 0; padding-left: 1px; }
.line .caret { margin: 0; }
.sep { width: 1px; height: 21px; background: #d0d0d0; margin: 0 2px; }
.combo { appearance: none; height: 21px; border: 1px solid #c6c6c6; border-radius: 0; opacity: 1;
  background: linear-gradient(45deg, transparent 50%, #bbb 50%) no-repeat right 6px center / 3px 3px, linear-gradient(-45deg, transparent 50%, #bbb 50%) no-repeat right 3px center / 3px 3px, linear-gradient(to left, #e8e8e8 13px, #fff 13px); }
.face { width: 104px; }
.size { width: 40px; margin-right: 3px; }
.letter { width: 18px; font-size: 12px; font-weight: 600; }
.line.second .letter { width: 16px; }
.letter sup { font-size: 8px; line-height: 8px; align-self: flex-start; }

/* formula bar */
.formula-bar { display: flex; height: 43px; padding: 9px 5px 10px; background: #e6e6e6; align-items: stretch; }
.namebox { width: 95px; height: auto; padding: 0 5px; color: #444; border-color: #d0d0d0; font-size: 12px;
  background: linear-gradient(45deg, transparent 50%, #777 50%) no-repeat right 8px center / 4px 4px, linear-gradient(-45deg, transparent 50%, #777 50%) no-repeat right 4px center / 4px 4px, #fdfdfd; }
.dots { width: 29px; background: radial-gradient(circle, #aaa 1px, transparent 1px) center / 4px 5px no-repeat, radial-gradient(circle, #aaa 1px, transparent 1px) center 4px / 4px 5px no-repeat, radial-gradient(circle, #aaa 1px, transparent 1px) center calc(100% - 4px) / 4px 5px no-repeat; }
.fx { width: 103px; display: flex; justify-content: space-around; background: #fdfdfd; border: 1px solid #d0d0d0; }
.fxb { font-size: 14px; }
.entry { flex: 1; margin-left: 3px; display: flex; align-items: center; padding-right: 3px; background: #fdfdfd; border: 1px solid #d0d0d0; }
.entry input { flex: 1; border: 0; background: none; min-width: 0; }

/* worksheet */
.sheet-area { display: flex; flex: 1; }
.sheet { flex: 1; position: relative; overflow: hidden; background: #fff; border-right: 1px solid #aaa; border-bottom: 1px solid #aaa; min-width: 0; }
.grid { border-collapse: separate; border-spacing: 0; table-layout: fixed; width: 1282px; height: 450px; font-size: 12px; line-height: 16px; color: #222; }
.c-num { width: 24px; } .c-a { width: 227px; } .c-b { width: 71px; } .c-x { width: 60px; }
.grid th { padding: 0; font-weight: 400; background: #e6e6e6; border-right: 1px solid #bbb; border-bottom: 1px solid #ccc; color: #444; }
.grid thead tr { height: 19px; }
.grid thead th { border-bottom-color: #999; }
.corner svg { margin-left: 10px; }
.grid td { position: relative; padding: 0; border-right: 1px solid #d4d4d4; border-bottom: 1px solid #d4d4d4; text-align: center; white-space: nowrap; overflow: hidden; }
.grid td:nth-child(2) { text-align: left; padding-left: 11px; }
.grid td.blank { background: repeating-linear-gradient(to right, transparent 0 59px, #d4d4d4 59px 60px); }
.boxed td:not(.blank) { border-bottom-color: #111; }
.boxed td:nth-child(2), .boxed td:nth-child(3), .total td:nth-child(2), .total td:nth-child(3) { border-right-color: #111; }
.total td:nth-child(3) { border-bottom-color: #111; }
.grid .head td:nth-child(2), .grid .head td:nth-child(3) { background: #ddebf7; font-weight: 700; }
.grid .head td:nth-child(2) { text-align: center; padding: 0; }
.grid .head td:nth-child(3) { text-align: left; padding-left: 2px; }
.filter { position: absolute; right: 1px; top: 1px; width: 15px; height: 15px; background: #fafafa; border: 1px solid #aaa; }
.chart-object { position: absolute; left: 860px; top: 19px; }
.chart-buttons { position: absolute; left: 972px; top: 26px; display: flex; flex-direction: column; gap: 10px; }
.chart-buttons button { width: 26px; height: 26px; background: #fff; border: 1px solid #aaa; }
.vscroll { width: 20px; display: flex; flex-direction: column; align-items: center; padding-top: 2px; }
.vscroll button, .hscroll button { width: 14px; height: 14px; background: #fff; border: 1px solid #b5b5b5; fill: #555; }
.vtrack { flex: 1; width: 14px; padding-bottom: 20px; background: #d4d4d4; display: flex; }
.vthumb { flex: 1; background: #fff; border: 1px solid #aaa; }

/* sheet tabs and status */
.sheet-tabs { display: flex; height: 26px; background: #e6e6e6; border-bottom: 1px solid #c6c6c6; padding-right: 20px; }
.navs { width: 94px; display: flex; align-items: center; gap: 23px; padding-left: 25px; }
.sheet-tab { width: 60px; height: 23px; background: #fff; color: #1e6b41; font-weight: 700; font-size: 12px; border-bottom: 2px solid #217346; }
.add { margin-left: 31px; }
.hscroll { display: flex; width: 477px; align-items: center; }
.sheet-tabs .dots { background-size: 4px 4px; }
.htrack { flex: 1; height: 14px; padding-right: 27px; background: #dedede; display: flex; }
.hthumb { flex: 1; background: #fff; border: 1px solid #b5b5b5; }
.status { display: flex; align-items: stretch; height: 21px; background: #f1f1f1; color: #444; line-height: 20px; padding-right: 8px; }
.ready { flex: 1; padding-left: 7px; }
.view { width: 36px; }
.view.on { background: #c9c9c9; }
.view path { fill: none; stroke: #666; }
.zoom-sign { width: 7px; align-self: center; height: 7px; background: linear-gradient(#555, #555) center / 7px 2px no-repeat; margin-left: 3px; }
.zoom-sign.plus { background: linear-gradient(#555, #555) center / 7px 1px no-repeat, linear-gradient(#555, #555) center / 1px 7px no-repeat; margin-left: 4px; }
.zoom { appearance: none; width: 95px; height: 20px; margin-left: 3px; background: linear-gradient(#aaa, #aaa) center / 100% 1px no-repeat; }
.zoom::-webkit-slider-thumb { appearance: none; width: 4px; height: 11px; background: #555; }
.percent { margin-left: 12px; }

/* taskbar */
.taskbar { height: 37px; display: flex; background: linear-gradient(to right, #25393f, #22353f 45%, #1b2a44); color: #fff; }
.system { display: flex; margin-right: 2px; }
.system button { width: 45px; }
.apps { display: flex; }
.apps button { width: 46px; position: relative; }
.apps .running { background: linear-gradient(#77aee0, #77aee0) bottom / 38px 3px no-repeat; }
.apps .current { background: #4c5d66; }
.tray { display: flex; align-items: center; gap: 8px; padding-right: 23px; position: relative; }
.tray svg { fill: none; stroke: #fff; stroke-width: 1.200; }
.tray .moon { stroke: none; }
.weather { font-size: 13px; }
.tray .t-chev { margin: 0 2px 0 6px; }
.tray time { line-height: 16px; text-align: center; margin: 0 7px 0 2px; }

/* dialog */
.dialog { position: absolute; left: 343px; top: 57px; width: 594px; background: #f0f0f0; border: 1px solid #777; box-shadow: 2px 4px 14px rgba(0, 0, 0, .45); color: #222; display: flex; flex-direction: column; }
.dialog-title { display: flex; align-items: center; height: 28px; background: #fff; padding: 0 16px 0 8px; }
.dialog-title h2 { font-size: 11px; flex: 1; }
.dialog-title button { margin-left: 34px; font-size: 13px; }
.dialog-tabs { display: flex; align-items: flex-end; height: 28px; padding: 7px 0 0 7px; }
.dialog-tabs button { width: 115px; height: 18px; border: 1px solid #ddd; border-bottom: 0; }
.dialog-tabs .on { width: 62px; height: 21px; background: #fff; margin-bottom: -1px; padding-bottom: 2px; position: relative; z-index: 1; }
.panel { display: flex; margin: -1px 7px 0 6px; background: #fff; border: 1px solid #dedede; padding: 12px 10px 11px 11px; }
.kinds { display: grid; grid-auto-rows: 1fr; width: 108px; height: 383px; margin-top: -1px; }
.kinds button { justify-content: flex-start; gap: 11px; padding-left: 3px; color: #555; }
.kinds svg { width: 15px; height: 15px; fill: none; stroke: #666; }
.kinds .on { background: #c3c3c3; color: #333; }
.detail { flex: 1; margin-left: 11px; padding-left: 10px; border-left: 1px solid #d0d0d0; min-width: 0; }
.subtypes { display: flex; padding-bottom: 5px; border-bottom: 1px solid #ccc; margin: 0 2px 0 1px; }
.subtypes button { width: 52px; height: 52px; }
.subtypes svg { width: 36px; height: 32px; fill: none; stroke: #777; }
.subtypes .on { background: #c3c3c3; }
.subtypes .on svg { width: 40px; height: 38px; margin: 6px 0 0 2px; }
.detail h3 { font-size: 14px; line-height: 20px; margin: 5px 0 4px 1px; }
.ct { font-size: 12px; text-anchor: middle; fill: #555; }
.ax { font-size: 7px; fill: #333; }
.ax.num { font-size: 8px; }
.ax.end { text-anchor: end; }
.ax.mid { text-anchor: middle; }
.hint { line-height: 16px; margin: 2px 0 1px; }
.series-box { height: 131px; border: 1px solid #888; padding: 0 1px; }
.series { border-collapse: collapse; table-layout: fixed; width: 100%; }
.s-name { width: 162px; } .s-axis { width: 79px; }
.series th { font-weight: 400; text-align: left; height: 13px; line-height: 13px; padding: 0 0 0 5px; white-space: nowrap; }
.series th + th { border-left: 1px solid #ddd; padding-left: 4px; }
.series th:last-child { padding: 0; text-align: right; }
.series td { height: 34px; padding: 0 0 0 9px; }
.series td:nth-child(2) { padding-left: 21px; }
.series td:last-child { text-align: center; padding: 0; }
.series .sel { background: #dedee2; }
.swatch { display: inline-block; width: 6px; height: 12px; margin-right: 9px; vertical-align: -2px; }
.blue { background: #5b9bd5; } .orange { background: #df7d36; }
.pick { width: 143px; height: 25px; display: flex; position: relative; border: 1px solid #aaa; background: linear-gradient(to left, #e1e1e1 23px, #aaa 23px 24px, #fff 24px); }
.pick select { appearance: none; width: 100%; border: 0; background: none; padding: 0 0 0 3px; border-radius: 0; }
.pick svg { position: absolute; right: 7px; top: 9px; pointer-events: none; }
.pick.hot select { width: 118px; background: #0078d7; color: #fff; margin: 1px 0; padding-left: 2px; }
.series input { appearance: none; display: block; margin: 0 auto; width: 13px; height: 13px; border: 1px solid #333; background: #fff; position: relative; }
.series input:checked::after { content: ""; position: absolute; left: 3px; top: 0; width: 4px; height: 8px; border: solid #222; border-width: 0 1px 1px 0; transform: rotate(42deg); }
.actions { display: flex; justify-content: flex-end; gap: 10px; padding: 4px 6px 7px; }
.actions button { width: 69px; height: 21px; background: #e1e1e1; border: 1px solid #adadad; }
.actions .ok { background: #e5f1fb; border-color: #2f7fae; }
.grip { position: absolute; right: 2px; bottom: 2px; }
.cursor { position: absolute; left: 474px; top: 544px; }
```
